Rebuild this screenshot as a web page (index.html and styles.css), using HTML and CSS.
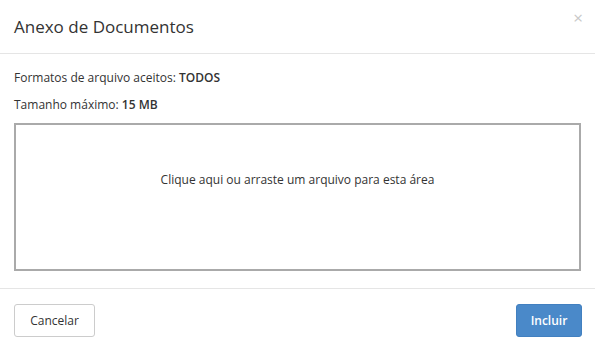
FILE: index.html
```html
<!DOCTYPE html>
<html lang="pt">
<head>
<meta charset="utf-8">
<link rel="stylesheet" href="styles.css">
</head>
<body>
<div class="modal">
  <div class="modal-header">
    <h4 class="modal-title">Anexo de Documentos</h4>
    <button class="close" type="button">&times;</button>
  </div>
  <div class="modal-body">
    <p class="info">Formatos de arquivo aceitos: <strong>TODOS</strong></p>
    <p class="info">Tamanho máximo: <strong>15 MB</strong></p>
    <div class="dropzone">Clique aqui ou arraste um arquivo para esta área</div>
  </div>
  <div class="modal-footer">
    <button class="btn btn-default" type="button">Cancelar</button>
    <button class="btn btn-primary" type="button">Incluir</button>
  </div>
</div>
</body>
</html>
```

FILE: styles.css
```css
html, body {
  margin: 0;
  padding: 0;
  background: #fff;
}
body {
  font-family: "Open Sans", "Noto Sans", sans-serif;
  color: #333;
  font-size: 12px;
}
.modal {
  width: 595px;
  height: 350px;
  box-sizing: border-box;
  display: flex;
  flex-direction: column;
}
.modal-header {
  height: 54px;
  box-sizing: border-box;
  border-bottom: 1px solid #e5e5e5;
  display: flex;
  align-items: center;
  justify-content: space-between;
  padding: 0 12px 0 14px;
}
.modal-title {
  margin: 0;
  font-size: 17px;
  font-weight: 400;
  color: #333;
}
.close {
  border: 0;
  background: none;
  padding: 0;
  font-family: "Open Sans", sans-serif;
  font-size: 17px;
  line-height: 1;
  color: #c8c8c8;
  margin-top: -18px;
}
.modal-body {
  padding: 15px 14px 0 14px;
  height: 235px;
  box-sizing: border-box;
  border-bottom: 1px solid #e5e5e5;
}
.info {
  margin: 0 0 10px 0;
  line-height: 17px;
  font-size: 12px;
  color: #333;
}
.info strong {
  font-weight: 600;
  color: #333;
}
.dropzone {
  margin-top: 9px;
  height: 148px;
  box-sizing: border-box;
  border: 2px solid #aaa;
  display: flex;
  justify-content: center;
  font-size: 12px;
  line-height: 17px;
  color: #333;
  padding-top: 46px;
}
.modal-footer {
  flex: 1;
  display: flex;
  justify-content: space-between;
  align-items: flex-start;
  padding: 15px 13px 0 14px;
}
.btn {
  height: 33px;
  box-sizing: border-box;
  border-radius: 3px;
  font-family: "Open Sans", sans-serif;
  font-size: 12px;
  padding: 0 12px;
  cursor: pointer;
}
.btn-default {
  width: 81px;
  background: #fff;
  border: 1px solid #ccc;
  color: #333;
}
.btn-primary {
  width: 66px;
  background: #4a89c9;
  border: 1px solid #4280c0;
  color: #fff;
  font-weight: 600;
}
```
